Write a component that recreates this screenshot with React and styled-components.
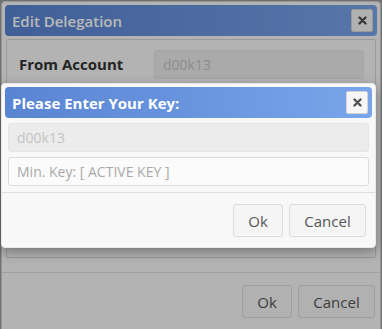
import React from "react";
import styled, { createGlobalStyle } from "styled-components";

const GlobalStyle = createGlobalStyle`
  html, body {
    margin: 0;
    padding: 0;
    background: #9c9c9c;
    font-family: "Open Sans", "Liberation Sans", sans-serif;
    overflow: hidden;
  }
`;

const Page = styled.div`
  position: relative;
  width: 382px;
  height: 329px;
  padding: 1px 0 0 1px;
  box-sizing: border-box;
`;

const Dialog = styled.div`
  width: 380px;
  height: 340px;
  box-sizing: border-box;
  background: #f8f8f8;
  border: 1px solid #cfcfcf;
  border-radius: 4px;
  padding: 3px;
  display: flex;
  flex-direction: column;
`;

const TitleBar = styled.div`
  height: 31px;
  flex: none;
  border-radius: 4px;
  background: linear-gradient(90deg, #5884d2 0%, #79a5ec 100%);
  display: flex;
  align-items: center;
  justify-content: space-between;
  padding: 0 4px 0 7px;
`;

const Title = styled.span`
  color: #fff;
  font-size: 15px;
  font-weight: ${(p) => (p.$light ? 600 : 700)};
`;

const CloseButton = styled.button`
  width: 22px;
  height: 23px;
  padding: 0;
  border: 1px solid #d4d4d4;
  border-radius: 2px;
  background: #f6f6f6;
  display: flex;
  align-items: center;
  justify-content: center;
`;

const Panel = styled.div`
  margin: 3px 1px 0;
  height: 219px;
  border: 1px solid #d6d6d6;
  border-radius: 2px;
  display: flex;
  align-items: flex-start;
  padding: 10px 11px 0 12px;
  box-sizing: border-box;
`;

const Label = styled.div`
  width: 135px;
  font-size: 15px;
  font-weight: 700;
  color: #333;
  line-height: 29px;
`;

const Input = styled.div`
  flex: 1;
  height: 29px;
  box-sizing: border-box;
  border: 1px solid ${(p) => (p.$disabled ? "#e6e6e6" : "#dcdcdc")};
  background: ${(p) => (p.$disabled ? "#ececec" : "#fbfbfb")};
  border-radius: 3px;
  padding: 0 8px;
  font-size: 14px;
  line-height: 27px;
  color: ${(p) => (p.$disabled ? "#c4c4c4" : "#a9a9a9")};
`;

const Divider = styled.div`
  height: 1px;
  background: #dedede;
  margin: ${(p) => p.$margin};
`;

const Footer = styled.div`
  display: flex;
  justify-content: flex-end;
  gap: 6px;
  padding: ${(p) => p.$padding};
`;

const Button = styled.button`
  width: ${(p) => p.$w}px;
  height: 33px;
  border: 1px solid #dcdcdc;
  border-radius: 3px;
  background: #f5f5f5;
  color: #555;
  font-family: "Open Sans", "Liberation Sans", sans-serif;
  font-size: 15px;
  padding: 0;
`;

const Dim = styled.div`
  position: absolute;
  inset: 0;
  background: rgba(0, 0, 0, 0.28);
`;

const Modal = styled.div`
  position: absolute;
  left: 1px;
  top: 83px;
  width: 375px;
  height: 165px;
  box-sizing: border-box;
  background: #f8f8f8;
  border: 1px solid #e8e8e8;
  border-radius: 4px;
  box-shadow: 0 4px 12px rgba(0, 0, 0, 0.35);
  padding: 3px;
  display: flex;
  flex-direction: column;
`;

const Fields = styled.div`
  display: flex;
  flex-direction: column;
  gap: 5px;
  padding: 5px 3px 0 3px;
`;

function CloseIcon() {
  return (
    <svg width="9" height="9" viewBox="0 0 9 9">
      <path
        d="M1.5 1.5 L7.5 7.5 M7.5 1.5 L1.5 7.5"
        stroke="#505050"
        strokeWidth="2.4"
        strokeLinecap="round"
      />
    </svg>
  );
}

export default function App() {
  return (
    <>
      <GlobalStyle />
      <Page>
        <Dialog>
          <TitleBar>
            <Title $light>Edit Delegation</Title>
            <CloseButton>
              <CloseIcon />
            </CloseButton>
          </TitleBar>
          <Panel>
            <Label>From Account</Label>
            <Input $disabled>d00k13</Input>
          </Panel>
          <Divider $margin="14px -3px 0" />
          <Footer $padding="12px 2px 0 0">
            <Button $w={50}>Ok</Button>
            <Button $w={77}>Cancel</Button>
          </Footer>
        </Dialog>
        <Dim />
        <Modal>
          <TitleBar>
            <Title>Please Enter Your Key:</Title>
            <CloseButton>
              <CloseIcon />
            </CloseButton>
          </TitleBar>
          <Fields>
            <Input $disabled>d00k13</Input>
            <Input>Min. Key: [ ACTIVE KEY ]</Input>
          </Fields>
          <Divider $margin="6px -3px 0" />
          <Footer $padding="11px 6px 0 0">
            <Button $w={50}>Ok</Button>
            <Button $w={77}>Cancel</Button>
          </Footer>
        </Modal>
      </Page>
    </>
  );
}
